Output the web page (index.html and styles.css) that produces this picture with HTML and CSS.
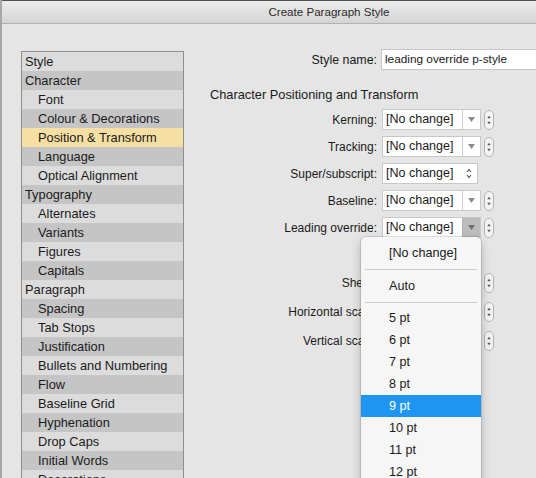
FILE: index.html
```html
<!DOCTYPE html>
<html>
<head>
<meta charset="utf-8">
<link rel="stylesheet" href="styles.css">
</head>
<body>
<div class="window">
  <div class="titlebar">Create Paragraph Style</div>
  <div class="content">
    <ul class="list">
      <li class="row">Style</li>
      <li class="row">Character</li>
      <li class="row sub">Font</li>
      <li class="row sub">Colour &amp; Decorations</li>
      <li class="row sub selected">Position &amp; Transform</li>
      <li class="row sub">Language</li>
      <li class="row sub">Optical Alignment</li>
      <li class="row">Typography</li>
      <li class="row sub">Alternates</li>
      <li class="row sub">Variants</li>
      <li class="row sub">Figures</li>
      <li class="row sub">Capitals</li>
      <li class="row">Paragraph</li>
      <li class="row sub">Spacing</li>
      <li class="row sub">Tab Stops</li>
      <li class="row sub">Justification</li>
      <li class="row sub">Bullets and Numbering</li>
      <li class="row sub">Flow</li>
      <li class="row sub">Baseline Grid</li>
      <li class="row sub">Hyphenation</li>
      <li class="row sub">Drop Caps</li>
      <li class="row sub">Initial Words</li>
      <li class="row sub">Decorations</li>
    </ul>
    <div class="form">
      <div class="name-row">
        <span class="label">Style name:</span>
        <div class="input">leading override p-style</div>
      </div>
      <div class="heading">Character Positioning and Transform</div>
      <div class="fields">
        <div class="field">
          <span class="label">Kerning:</span>
          <div class="select"><span class="value">[No change]</span><span class="arrow"><svg width="7" height="5" viewBox="0 0 7 5"><path d="M0 0H7L3.5 5Z" fill="#8c8c8c"/></svg></span></div>
          <svg class="stepper" width="10" height="20" viewBox="0 0 10 20"><rect x="0.5" y="0.5" width="9" height="19" rx="4.5" fill="#f3f3f3" stroke="#b3b3b3"/><path d="M3.2 8.2L5 5.8L6.8 8.2Z" fill="#5a5a5a"/><path d="M3.2 11.8L5 14.2L6.8 11.8Z" fill="#5a5a5a"/></svg>
        </div>
        <div class="field">
          <span class="label">Tracking:</span>
          <div class="select"><span class="value">[No change]</span><span class="arrow"><svg width="7" height="5" viewBox="0 0 7 5"><path d="M0 0H7L3.5 5Z" fill="#8c8c8c"/></svg></span></div>
          <svg class="stepper" width="10" height="20" viewBox="0 0 10 20"><rect x="0.5" y="0.5" width="9" height="19" rx="4.5" fill="#f3f3f3" stroke="#b3b3b3"/><path d="M3.2 8.2L5 5.8L6.8 8.2Z" fill="#5a5a5a"/><path d="M3.2 11.8L5 14.2L6.8 11.8Z" fill="#5a5a5a"/></svg>
        </div>
        <div class="field">
          <span class="label">Super/subscript:</span>
          <div class="select popup"><span class="value">[No change]</span><svg class="updown" width="6" height="11" viewBox="0 0 6 11"><path d="M1 4L3 1.5L5 4" fill="none" stroke="#555" stroke-width="1.1"/><path d="M1 7L3 9.5L5 7" fill="none" stroke="#555" stroke-width="1.1"/></svg></div>
        </div>
        <div class="field">
          <span class="label">Baseline:</span>
          <div class="select"><span class="value">[No change]</span><span class="arrow"><svg width="7" height="5" viewBox="0 0 7 5"><path d="M0 0H7L3.5 5Z" fill="#8c8c8c"/></svg></span></div>
          <svg class="stepper" width="10" height="20" viewBox="0 0 10 20"><rect x="0.5" y="0.5" width="9" height="19" rx="4.5" fill="#f3f3f3" stroke="#b3b3b3"/><path d="M3.2 8.2L5 5.8L6.8 8.2Z" fill="#5a5a5a"/><path d="M3.2 11.8L5 14.2L6.8 11.8Z" fill="#5a5a5a"/></svg>
        </div>
        <div class="field">
          <span class="label">Leading override:</span>
          <div class="select"><span class="value">[No change]</span><span class="arrow pressed"><svg width="7" height="5" viewBox="0 0 7 5"><path d="M0 0H7L3.5 5Z" fill="#6e6e6e"/></svg></span></div>
          <svg class="stepper" width="10" height="20" viewBox="0 0 10 20"><rect x="0.5" y="0.5" width="9" height="19" rx="4.5" fill="#f3f3f3" stroke="#b3b3b3"/><path d="M3.2 8.2L5 5.8L6.8 8.2Z" fill="#5a5a5a"/><path d="M3.2 11.8L5 14.2L6.8 11.8Z" fill="#5a5a5a"/></svg>
        </div>
        <div class="field spacer"></div>
        <div class="field tall">
          <span class="label">Shear:</span>
          <div class="input small"></div>
          <svg class="stepper" width="10" height="20" viewBox="0 0 10 20"><rect x="0.5" y="0.5" width="9" height="19" rx="4.5" fill="#f3f3f3" stroke="#b3b3b3"/><path d="M3.2 8.2L5 5.8L6.8 8.2Z" fill="#5a5a5a"/><path d="M3.2 11.8L5 14.2L6.8 11.8Z" fill="#5a5a5a"/></svg>
        </div>
        <div class="field tall">
          <span class="label">Horizontal scale:</span>
          <div class="input small"></div>
          <svg class="stepper" width="10" height="20" viewBox="0 0 10 20"><rect x="0.5" y="0.5" width="9" height="19" rx="4.5" fill="#f3f3f3" stroke="#b3b3b3"/><path d="M3.2 8.2L5 5.8L6.8 8.2Z" fill="#5a5a5a"/><path d="M3.2 11.8L5 14.2L6.8 11.8Z" fill="#5a5a5a"/></svg>
        </div>
        <div class="field tall">
          <span class="label">Vertical scale:</span>
          <div class="input small"></div>
          <svg class="stepper" width="10" height="20" viewBox="0 0 10 20"><rect x="0.5" y="0.5" width="9" height="19" rx="4.5" fill="#f3f3f3" stroke="#b3b3b3"/><path d="M3.2 8.2L5 5.8L6.8 8.2Z" fill="#5a5a5a"/><path d="M3.2 11.8L5 14.2L6.8 11.8Z" fill="#5a5a5a"/></svg>
        </div>
      </div>
    </div>
  </div>
  <div class="menu">
    <div class="item">[No change]</div>
    <div class="sep first"></div>
    <div class="item">Auto</div>
    <div class="sep"></div>
    <div class="item">5 pt</div>
    <div class="item">6 pt</div>
    <div class="item">7 pt</div>
    <div class="item">8 pt</div>
    <div class="item active">9 pt</div>
    <div class="item">10 pt</div>
    <div class="item">11 pt</div>
    <div class="item">12 pt</div>
  </div>
</div>
</body>
</html>
```

FILE: styles.css
```css
html, body {
  margin: 0;
  padding: 0;
}
body {
  width: 536px;
  height: 478px;
  overflow: hidden;
  font-family: "Liberation Sans", Arial, sans-serif;
  font-size: 13px;
  color: #1a1a1a;
  background: #e4e4e4;
}
.window {
  position: relative;
  height: 478px;
  box-sizing: border-box;
  border-left: 2px solid #a7a7a7;
  background: #e5e5e5;
  overflow: hidden;
}
.titlebar {
  height: 22px;
  line-height: 22px;
  border-top: 1px solid #505050;
  border-bottom: 1px solid #b2b2b2;
  background: linear-gradient(#ececec, #d4d4d4);
  text-align: center;
  padding-left: 120px;
  color: #2a2a2a;
  font-size: 11.6px;
}
.content {
  display: flex;
  align-items: flex-start;
}
.list {
  list-style: none;
  margin: 27px 0 0 19px;
  padding: 0;
  width: 161px;
  border: 1px solid #8e8e8e;
  border-bottom: none;
  font-size: 12.8px;
}
.row {
  height: 19px;
  line-height: 19px;
  padding-left: 3px;
  white-space: nowrap;
}
.row:nth-child(odd) {
  background: #dcdcdc;
}
.row:nth-child(even) {
  background: #c5c5c5;
}
.row.sub {
  padding-left: 16px;
}
.row.selected {
  background: #f6dfa2;
}
.form {
  flex: 1;
  padding-top: 25px;
}
.label {
  width: 193px;
  flex: none;
  text-align: right;
  white-space: nowrap;
  font-size: 12px;
}
.name-row {
  display: flex;
  align-items: center;
  height: 21px;
}
.name-row .label {
  font-size: 12.4px;
}
.name-row .input {
  margin-left: 4px;
  flex: 1;
  height: 21px;
  line-height: 19px;
  box-sizing: border-box;
  background: #fff;
  border: 1px solid #c6c6c6;
  border-right: none;
  padding-left: 3px;
  white-space: nowrap;
  font-size: 11.8px;
}
.heading {
  margin-top: 17px;
  padding-left: 26px;
  line-height: 16px;
  font-size: 12.8px;
}
.fields {
  margin-top: 6px;
}
.field {
  display: flex;
  align-items: center;
  height: 21px;
  margin-bottom: 6px;
}
.field.spacer {
  margin-bottom: 7px;
}
.field.tall {
  margin-bottom: 8px;
}
.select {
  margin-left: 5px;
  width: 99px;
  height: 21px;
  box-sizing: border-box;
  background: #fff;
  border: 1px solid #c8c8c8;
  display: flex;
  align-items: stretch;
}
.select .value {
  flex: 1;
  line-height: 19px;
  padding-left: 3px;
  white-space: nowrap;
  font-size: 12.5px;
}
.select .arrow {
  width: 17px;
  border-left: 1px solid #cfcfcf;
  display: flex;
  align-items: center;
  justify-content: center;
}
.select .arrow.pressed {
  background: #bcbcbc;
  border-left-color: #b0b0b0;
}
.select.popup {
  width: 96px;
  align-items: center;
}
.select.popup .updown {
  margin-right: 5px;
}
.input.small {
  margin-left: 5px;
  width: 99px;
  height: 21px;
  box-sizing: border-box;
  background: #fff;
  border: 1px solid #c8c8c8;
}
.stepper {
  margin-left: 3px;
  flex: none;
}
.menu {
  position: absolute;
  left: 359px;
  top: 237px;
  width: 120px;
  height: 260px;
  box-sizing: border-box;
  padding-top: 5px;
  background: #f6f6f6;
  border-radius: 5px 5px 0 0;
  box-shadow: 0 1px 0 0 rgba(0,0,0,0.08), 0 0 0 1px rgba(0,0,0,0.1), 0 4px 10px rgba(0,0,0,0.25);
}
.menu .item {
  height: 22px;
  line-height: 22px;
  padding-left: 28px;
  color: #1a1a1a;
  white-space: nowrap;
  font-size: 12.6px;
}
.menu .item.active {
  background: #1f95f2;
  color: #fff;
}
.menu .sep {
  height: 10px;
  position: relative;
}
.menu .sep.first {
  height: 11px;
}
.menu .sep::after {
  content: "";
  position: absolute;
  left: 4px;
  right: 4px;
  top: 5px;
  height: 1px;
  background: #cdcdcd;
}
```
